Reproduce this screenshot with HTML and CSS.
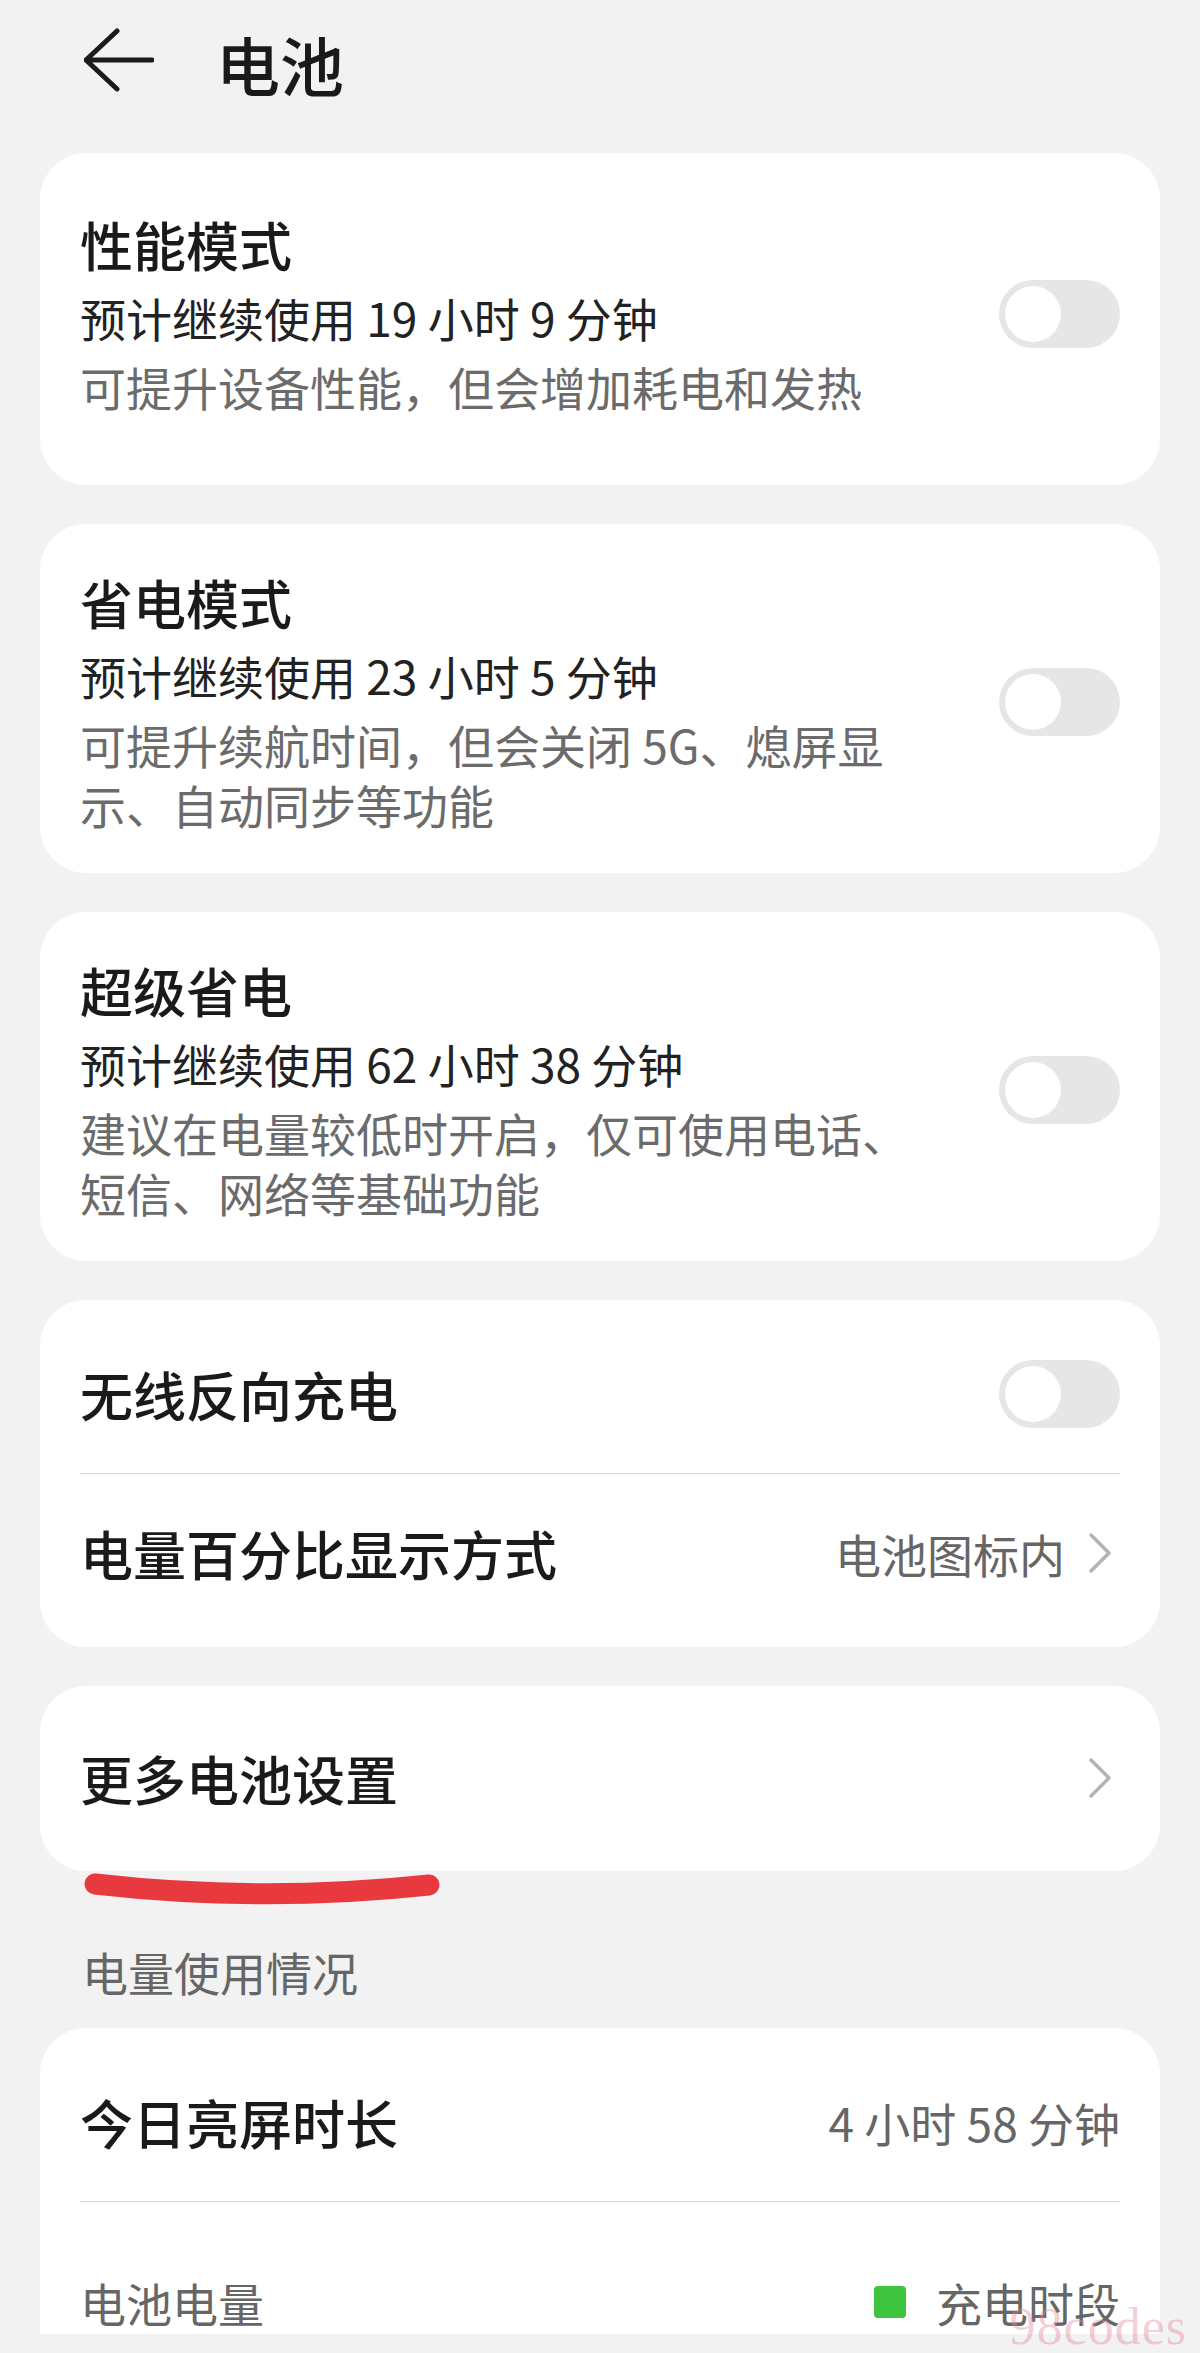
FILE: index.html
```html
<!DOCTYPE html>
<html lang="zh-CN">
<head>
<meta charset="utf-8">
<title>电池</title>
<link rel="stylesheet" href="styles.css">
</head>
<body>
<div class="page">
  <header class="topbar">
    <svg class="back" viewBox="0 0 70 70" aria-hidden="true"><path d="M33 3 L2 32 L33 61 M2 32 H68"/></svg>
    <h1 class="page-title">电池</h1>
  </header>

  <main class="content">
    <section class="card card-mode card-first">
      <div class="mode-text">
        <div class="item-title">性能模式</div>
        <div class="item-est">预计继续使用 19 小时 9 分钟</div>
        <div class="item-desc">可提升设备性能，但会增加耗电和发热</div>
      </div>
      <span class="switch"></span>
    </section>

    <section class="card card-mode">
      <div class="mode-text">
        <div class="item-title">省电模式</div>
        <div class="item-est">预计继续使用 23 小时 5 分钟</div>
        <div class="item-desc">可提升续航时间，但会关闭 5G、熄屏显示、自动同步等功能</div>
      </div>
      <span class="switch"></span>
    </section>

    <section class="card card-mode">
      <div class="mode-text">
        <div class="item-title">超级省电</div>
        <div class="item-est">预计继续使用 62 小时 38 分钟</div>
        <div class="item-desc">建议在电量较低时开启，仅可使用电话、短信、网络等基础功能</div>
      </div>
      <span class="switch"></span>
    </section>

    <section class="card card-list">
      <div class="row">
        <span class="item-title">无线反向充电</span>
        <span class="switch"></span>
      </div>
      <div class="divider"></div>
      <div class="row">
        <span class="item-title">电量百分比显示方式</span>
        <span class="row-value">电池图标内<svg class="chevron" viewBox="0 0 26 44" aria-hidden="true"><polyline points="4,4 22,22 4,40"/></svg></span>
      </div>
    </section>

    <section class="card card-single">
      <div class="row">
        <span class="item-title">更多电池设置</span>
        <span class="row-value"><svg class="chevron" viewBox="0 0 26 44" aria-hidden="true"><polyline points="4,4 22,22 4,40"/></svg></span>
      </div>
      <svg class="annotation" viewBox="0 0 370 40" aria-hidden="true"><path d="M15 13 Q 182 32 349 14"/></svg>
    </section>

    <div class="section-label">电量使用情况</div>

    <section class="card card-list card-clipped">
      <div class="row">
        <span class="item-title">今日亮屏时长</span>
        <span class="row-value">4 小时 58 分钟</span>
      </div>
      <div class="divider"></div>
      <div class="row row-chart">
        <span class="chart-label">电池电量</span>
        <span class="legend"><i class="legend-swatch"></i>充电时段</span>
      </div>
    </section>
  </main>

  <div class="watermark">98codes</div>
</div>
</body>
</html>
```

FILE: styles.css
```css
html, body {
  margin: 0;
  padding: 0;
}

body {
  width: 1200px;
  height: 2353px;
  overflow: hidden;
  background: #f2f2f2;
  font-family: "Noto Sans CJK SC", "Noto Sans", sans-serif;
  color: #1a1a1a;
}

.page {
  position: relative;
  height: 2353px;
}

/* ---------- header ---------- */
.topbar {
  height: 126px;
  display: flex;
  align-items: center;
  padding-left: 84px;
  margin-bottom: 27px;
}

.back {
  width: 70px;
  height: 70px;
  flex: none;
}

.back path {
  fill: none;
  stroke: #1a1a1a;
  stroke-width: 5;
  stroke-linecap: round;
  stroke-linejoin: round;
}

.page-title {
  margin: 0 0 0 62px;
  font-size: 64px;
  line-height: 1;
  font-weight: 500;
  color: #1a1a1a;
}

/* ---------- cards ---------- */
.content {
  padding: 0 40px;
}

.card {
  background: #ffffff;
  border-radius: 46px;
  padding: 0 40px;
}

.card + .card {
  margin-top: 39px;
}

.card-mode {
  display: flex;
  align-items: center;
  padding-top: 45px;
  padding-bottom: 39px;
}

.card-first {
  padding-top: 58px;
  padding-bottom: 69px;
}

.mode-text {
  width: 838px;
}

.item-title {
  font-size: 53px;
  line-height: 66px;
  font-weight: 500;
  color: #1a1a1a;
  white-space: nowrap;
}

.item-est {
  margin-top: 10px;
  font-size: 46px;
  line-height: 60px;
  color: #222222;
}

.item-desc {
  margin-top: 9px;
  font-size: 46px;
  line-height: 60px;
  color: #6b6b6b;
}

/* toggle switch (off) */
.switch {
  position: relative;
  flex: none;
  margin-left: auto;
  width: 121px;
  height: 68px;
  border-radius: 34px;
  background: #e6e6e6;
}

.switch::after {
  content: "";
  position: absolute;
  left: 6px;
  top: 6px;
  width: 56px;
  height: 56px;
  border-radius: 50%;
  background: #ffffff;
}

/* list cards */
.card-list {
  padding-top: 15px;
  padding-bottom: 15px;
}

.row {
  display: flex;
  align-items: center;
  justify-content: space-between;
  height: 66px;
  padding: 46px 0;
}

.divider {
  height: 1px;
  background: #d4d4d4;
}

.row-value {
  display: flex;
  align-items: center;
  gap: 22px;
  font-size: 46px;
  line-height: 60px;
  color: #666666;
  white-space: nowrap;
}

.chevron {
  width: 26px;
  height: 44px;
  margin-right: 7px;
  flex: none;
}

.chevron polyline {
  fill: none;
  stroke: #b3b3b3;
  stroke-width: 3.5;
  stroke-linecap: round;
  stroke-linejoin: round;
}

.card-single {
  position: relative;
  padding-top: 59px;
  padding-bottom: 60px;
}

.card-single .row {
  padding: 0;
}

/* hand-drawn red annotation under the card */
.annotation {
  position: absolute;
  left: 40px;
  top: 100%;
  width: 370px;
  height: 40px;
}

.annotation path {
  fill: none;
  stroke: #e83a3e;
  stroke-width: 21;
  stroke-linecap: round;
}

/* section label */
.section-label {
  margin: 70px 0 27px;
  padding-left: 42px;
  font-size: 46px;
  line-height: 60px;
  color: #666666;
}

.card-clipped {
  border-radius: 46px 46px 0 0;
  padding-bottom: 0;
}

.row-chart {
  height: 60px;
  padding: 70px 0 2px;
}

.chart-label {
  font-size: 46px;
  line-height: 60px;
  color: #666666;
}

.legend {
  display: flex;
  align-items: center;
  gap: 30px;
  font-size: 46px;
  line-height: 60px;
  color: #666666;
}

.legend-swatch {
  display: block;
  width: 32px;
  height: 32px;
  border-radius: 4px;
  background: #3ec43f;
}

/* watermark */
.watermark {
  position: absolute;
  right: 13px;
  bottom: 0;
  font-family: "Liberation Serif", serif;
  font-size: 52px;
  line-height: 1;
  letter-spacing: 1px;
  color: rgba(230, 135, 150, 0.4);
}
```
